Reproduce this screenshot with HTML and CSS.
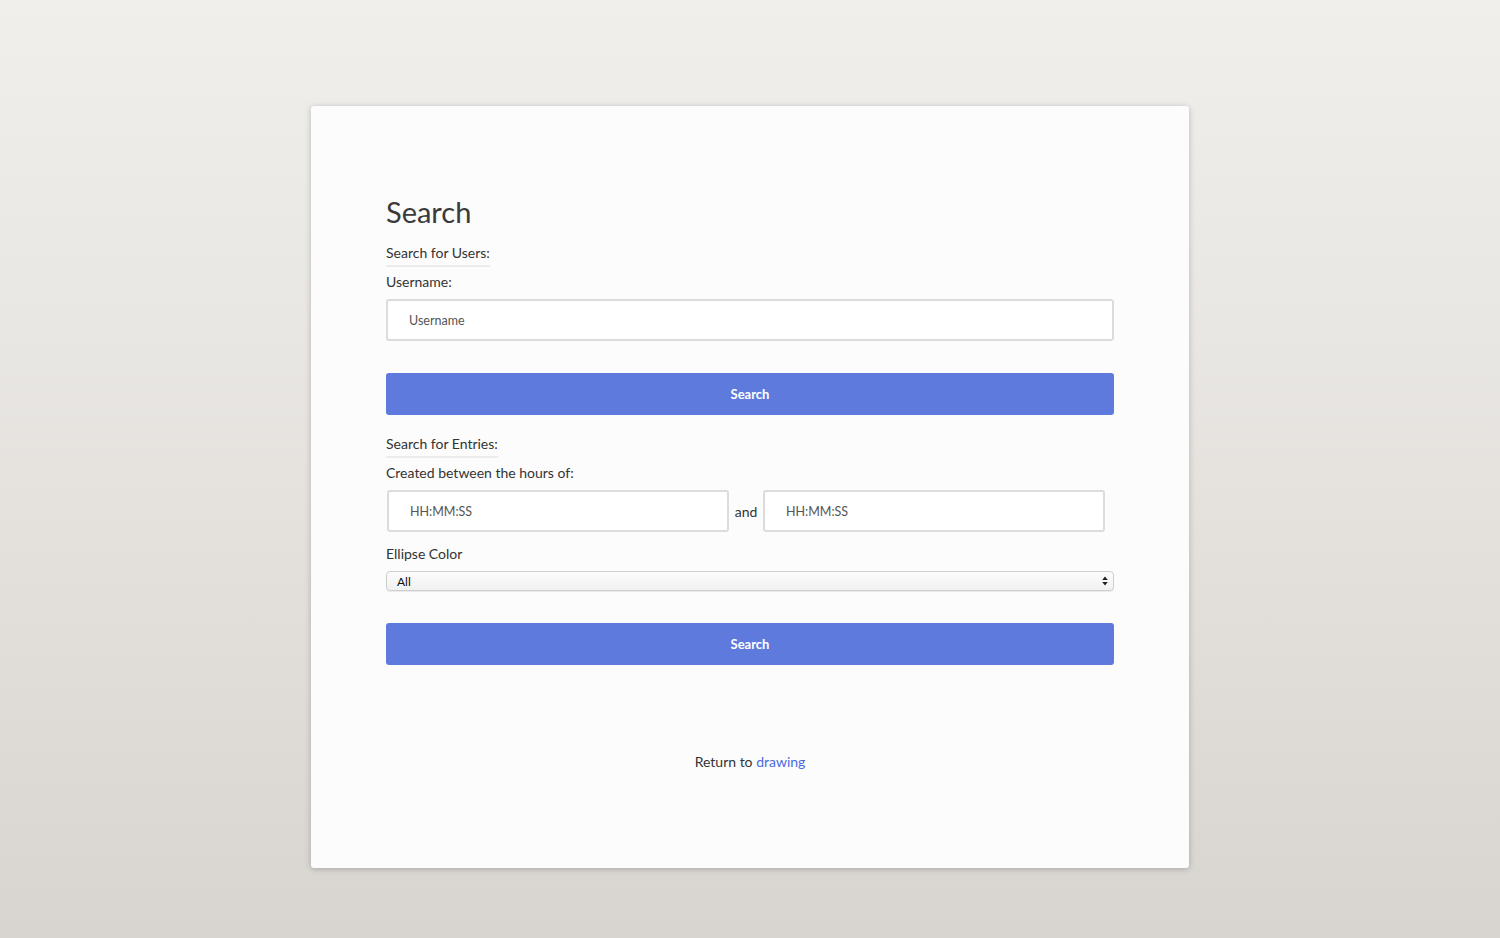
FILE: index.html
```html
<!DOCTYPE html>
<html>
<head>
<meta charset="utf-8">
<link rel="stylesheet" href="styles.css">
</head>
<body>
<div class="page">
  <div class="card">
    <h1 class="title">Search</h1>
    <div class="section-label">Search for Users:</div>
    <div class="field-label">Username:</div>
    <input class="text-input" type="text" placeholder="Username">
    <button class="btn">Search</button>
    <div class="section-label">Search for Entries:</div>
    <div class="field-label">Created between the hours of:</div>
    <div class="time-row">
      <input class="text-input time-input" type="text" placeholder="HH:MM:SS">
      <span class="and">and</span>
      <input class="text-input time-input" type="text" placeholder="HH:MM:SS">
    </div>
    <div class="field-label color-label">Ellipse Color</div>
    <div class="select">
      <span>All</span>
      <svg class="arrows" width="6" height="10" viewBox="0 0 6 10"><path d="M3 0.5 L5.8 4 L0.2 4 Z M3 9.5 L5.8 6 L0.2 6 Z" fill="#222"/></svg>
    </div>
    <button class="btn btn-2">Search</button>
    <div class="footer">Return to <a href="#">drawing</a></div>
  </div>
</div>
</body>
</html>
```

FILE: styles.css
```css
html, body {
  margin: 0;
  padding: 0;
  height: 100%;
}
body {
  background: linear-gradient(to bottom, #f0efec 0%, #e6e3df 50%, #d8d4cf 100%);
  font-family: "Lato", "Open Sans", sans-serif;
  color: #333;
}
.page {
  display: flex;
  justify-content: center;
  padding-top: 106px;
}
.card {
  width: 878px;
  height: 762px;
  box-sizing: border-box;
  background: #fcfcfc;
  border-radius: 3px;
  box-shadow: 0 1px 6px rgba(0,0,0,0.22);
  padding: 88px 75px 0 75px;
  display: flex;
  flex-direction: column;
  align-items: flex-start;
}
.title {
  font-size: 29px;
  font-weight: 400;
  color: #3a3a3a;
  margin: 0 0 14px 0;
  line-height: 36px;
}
.section-label {
  font-size: 14px;
  line-height: 18px;
  padding-bottom: 3px;
  border-bottom: 2px solid #ececec;
  margin-bottom: 6px;
}
.field-label {
  font-size: 14px;
  line-height: 18px;
  margin-bottom: 8px;
}
.text-input {
  width: 100%;
  height: 42px;
  box-sizing: border-box;
  border: 2px solid #dcdcdc;
  border-radius: 3px;
  background: #fff;
  padding: 0 21px;
  font-family: "Lato", sans-serif;
  font-size: 12.5px;
  color: #555;
  outline: none;
}
.text-input::placeholder {
  color: #555;
}
.btn {
  width: 100%;
  height: 42px;
  margin-top: 32px;
  margin-bottom: 20px;
  border: none;
  border-radius: 3px;
  background: #5e7adc;
  color: #fff;
  font-family: "Lato", sans-serif;
  font-size: 13px;
  font-weight: 700;
}
.time-row {
  display: flex;
  align-items: center;
  width: 100%;
  padding-left: 1px;
  box-sizing: border-box;
}
.time-input {
  width: 342px;
  flex: none;
}
.and {
  font-size: 14px;
  width: 34px;
  text-align: center;
}
.color-label {
  margin-top: 13px;
  margin-bottom: 0;
}
.select {
  margin-top: 8px;
  width: 100%;
  height: 20px;
  box-sizing: border-box;
  border: 1px solid #cfcfcf;
  border-radius: 4px;
  background: linear-gradient(#fcfcfc, #f1f1f1);
  display: flex;
  align-items: center;
  justify-content: space-between;
  padding: 0 5px 0 10px;
  font-size: 12px;
  color: #111;
  box-shadow: 0 1px 1px rgba(0,0,0,0.08);
}
.btn-2 {
  margin-top: 32px;
  margin-bottom: 0;
}
.footer {
  align-self: center;
  margin-top: 88px;
  font-size: 14px;
}
.footer a {
  color: #4a6ae0;
  text-decoration: none;
}
```
